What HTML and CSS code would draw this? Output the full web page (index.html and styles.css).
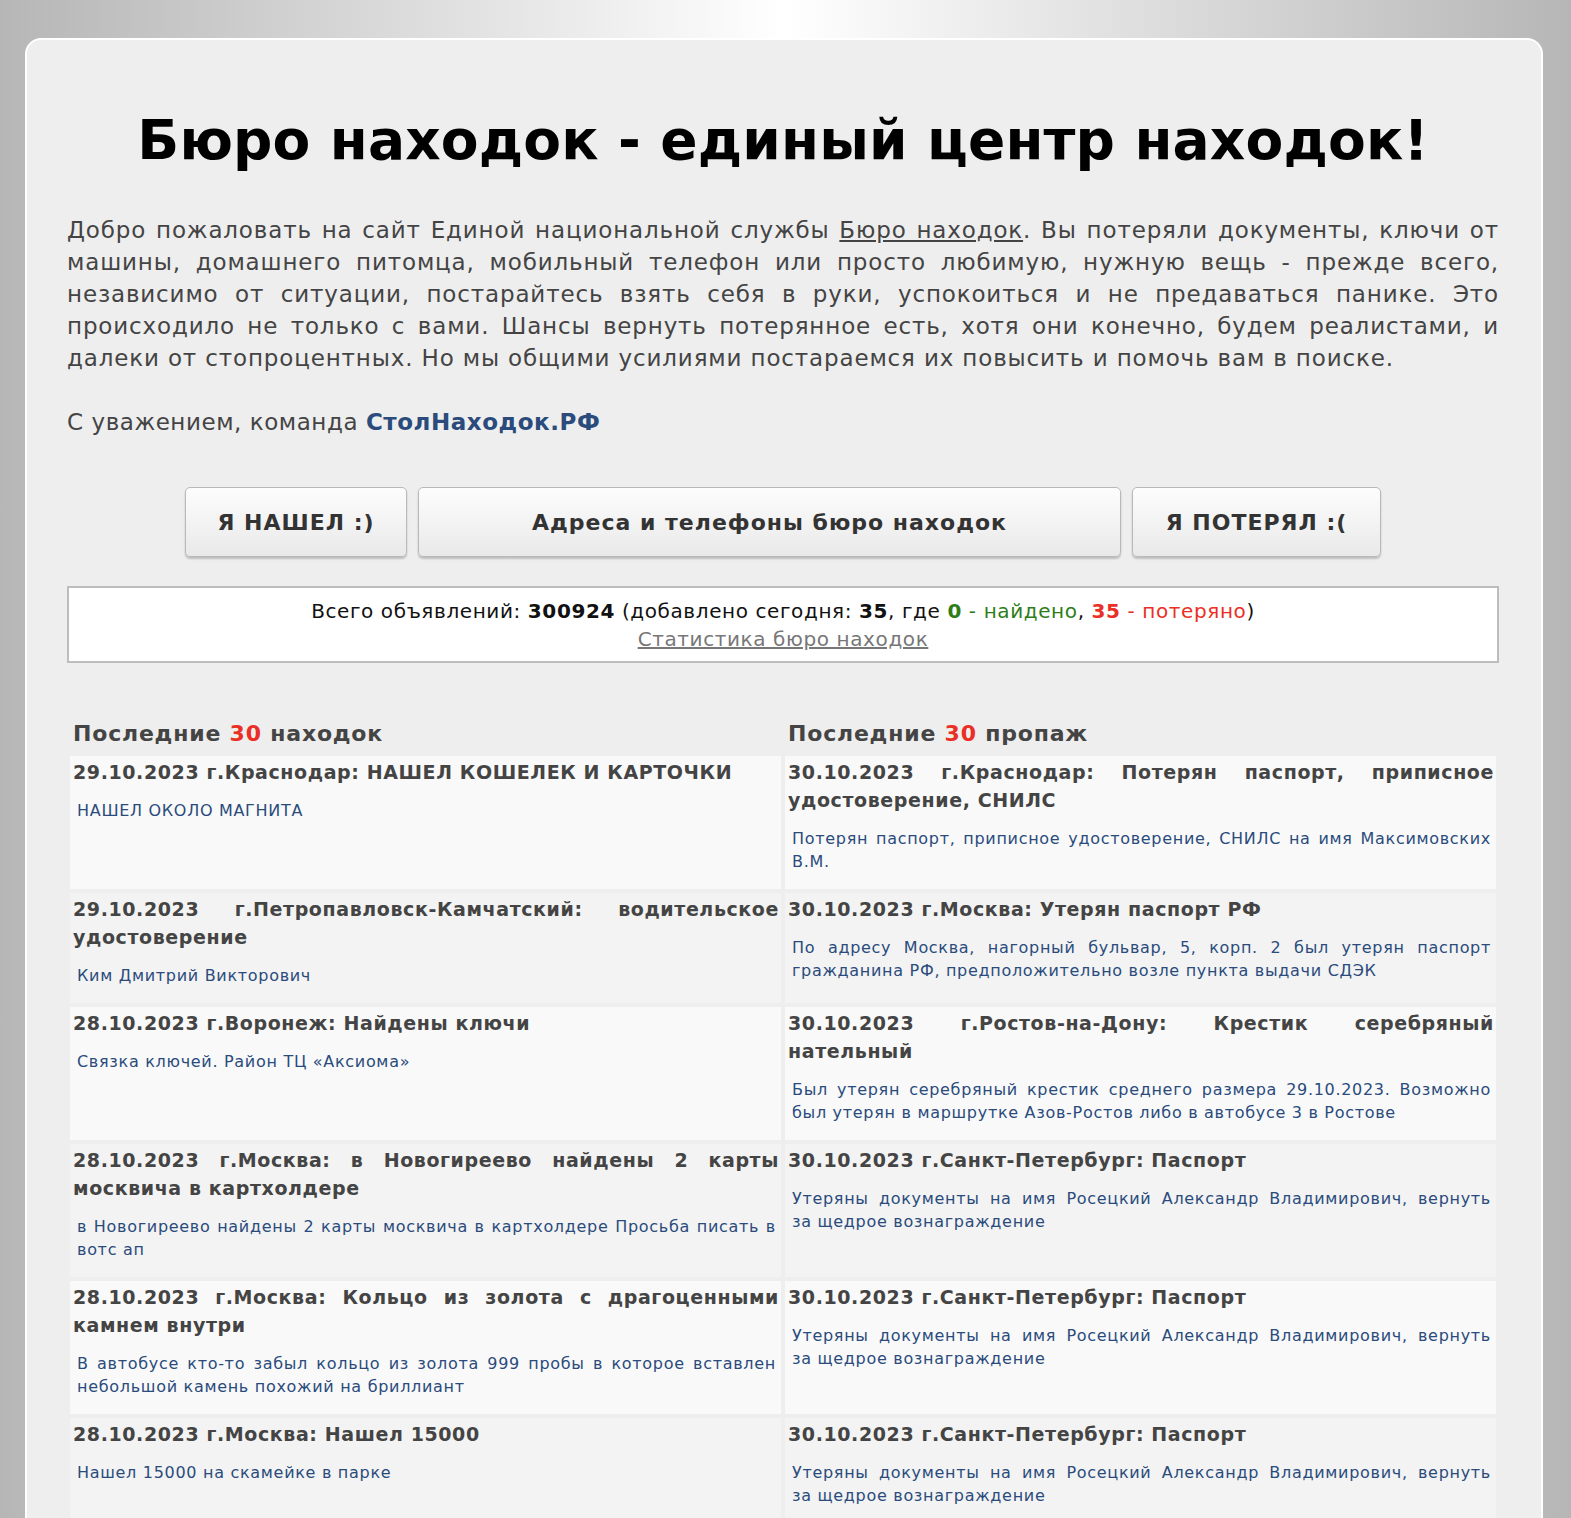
FILE: index.html
```html
<!DOCTYPE html>
<html lang="ru">
<head>
<meta charset="utf-8">
<title>Бюро находок - единый центр находок!</title>
<link rel="stylesheet" href="styles.css">
</head>
<body>
<div class="card">
  <h1 class="title">Бюро находок - единый центр находок!</h1>
  <p class="intro">Добро пожаловать на сайт Единой национальной службы <a href="#" class="intro-link">Бюро находок</a>. Вы потеряли документы, ключи от машины, домашнего питомца, мобильный телефон или просто любимую, нужную вещь - прежде всего, независимо от ситуации, постарайтесь взять себя в руки, успокоиться и не предаваться панике. Это происходило не только с вами. Шансы вернуть потерянное есть, хотя они конечно, будем реалистами, и далеки от стопроцентных. Но мы общими усилиями постараемся их повысить и помочь вам в поиске.</p>
  <p class="regards">С уважением, команда <a href="#" class="brand">СтолНаходок.РФ</a></p>

  <div class="actions">
    <a href="#" class="btn btn-found">Я НАШЕЛ :)</a>
    <a href="#" class="btn btn-addr">Адреса и телефоны бюро находок</a>
    <a href="#" class="btn btn-lost">Я ПОТЕРЯЛ :(</a>
  </div>

  <div class="stats">
    <div>Всего объявлений: <b>300924</b> (добавлено сегодня: <b>35</b>, где <span class="green"><b>0</b> - найдено</span>, <span class="red"><b>35</b> - потеряно</span>)</div>
    <div><a href="#" class="stats-link">Статистика бюро находок</a></div>
  </div>

  <div class="board">
    <div class="board-head">Последние <span class="red">30</span> находок</div>
    <div class="board-head">Последние <span class="red">30</span> пропаж</div>

    <div class="item odd"><div class="item-title">29.10.2023 г.Краснодар: НАШЕЛ КОШЕЛЕК И КАРТОЧКИ</div><div class="item-desc">НАШЕЛ ОКОЛО МАГНИТА</div></div>
    <div class="item odd"><div class="item-title">30.10.2023 г.Краснодар: Потерян паспорт, приписное удостоверение, СНИЛС</div><div class="item-desc">Потерян паспорт, приписное удостоверение, СНИЛС на имя Максимовских В.М.</div></div>

    <div class="item even"><div class="item-title">29.10.2023 г.Петропавловск-Камчатский: водительское удостоверение</div><div class="item-desc">Ким Дмитрий Викторович</div></div>
    <div class="item even"><div class="item-title">30.10.2023 г.Москва: Утерян паспорт РФ</div><div class="item-desc">По адресу Москва, нагорный бульвар, 5, корп. 2 был утерян паспорт гражданина РФ, предположительно возле пункта выдачи СДЭК</div></div>

    <div class="item odd"><div class="item-title">28.10.2023 г.Воронеж: Найдены ключи</div><div class="item-desc">Связка ключей. Район ТЦ «Аксиома»</div></div>
    <div class="item odd"><div class="item-title">30.10.2023 г.Ростов-на-Дону: Крестик серебряный нательный</div><div class="item-desc">Был утерян серебряный крестик среднего размера 29.10.2023. Возможно был утерян в маршрутке Азов-Ростов либо в автобусе 3 в Ростове</div></div>

    <div class="item even"><div class="item-title">28.10.2023 г.Москва: в Новогиреево найдены 2 карты москвича в картхолдере</div><div class="item-desc">в Новогиреево найдены 2 карты москвича в картхолдере Просьба писать в вотс ап</div></div>
    <div class="item even"><div class="item-title">30.10.2023 г.Санкт-Петербург: Паспорт</div><div class="item-desc">Утеряны документы на имя Росецкий Александр Владимирович, вернуть за&nbsp;щедрое вознаграждение</div></div>

    <div class="item odd"><div class="item-title">28.10.2023 г.Москва: Кольцо из золота с драгоценными камнем внутри</div><div class="item-desc">В автобусе кто-то забыл кольцо из золота 999 пробы в которое вставлен небольшой камень похожий на бриллиант</div></div>
    <div class="item odd"><div class="item-title">30.10.2023 г.Санкт-Петербург: Паспорт</div><div class="item-desc">Утеряны документы на имя Росецкий Александр Владимирович, вернуть за&nbsp;щедрое вознаграждение</div></div>

    <div class="item even"><div class="item-title">28.10.2023 г.Москва: Нашел 15000</div><div class="item-desc">Нашел 15000 на скамейке в парке</div></div>
    <div class="item even"><div class="item-title">30.10.2023 г.Санкт-Петербург: Паспорт</div><div class="item-desc">Утеряны документы на имя Росецкий Александр Владимирович, вернуть за&nbsp;щедрое вознаграждение</div></div>
  </div>
</div>
</body>
</html>
```

FILE: styles.css
```css
html, body {
  margin: 0;
  padding: 0;
}
body {
  background: linear-gradient(to right, #b6b6b6 0%, #ffffff 50%, #b6b6b6 100%);
  font-family: "DejaVu Sans", Verdana, sans-serif;
  color: #444;
  min-height: 1518px;
}
.card {
  box-sizing: border-box;
  width: 1518px;
  margin: 38px 0 0 25px;
  padding: 65px 42px 40px 40px;
  background: #eeeeee;
  border: 2px solid #ffffff;
  border-bottom: none;
  border-radius: 16px 16px 0 0;
  min-height: 1500px;
}
.title {
  margin: 0;
  font-family: "DejaVu Sans", sans-serif;
  font-weight: bold;
  font-size: 55px;
  letter-spacing: 0.15px;
  line-height: 70px;
  text-align: center;
  color: #000;
}
.intro {
  margin: 39px 0 0;
  font-size: 23px;
  letter-spacing: 0.85px;
  line-height: 32px;
  text-align: justify;
  color: #444;
}
.intro-link {
  color: #444;
  text-decoration: underline;
}
.regards {
  margin: 32px 0 0;
  font-size: 23px;
  letter-spacing: 0.55px;
  line-height: 32px;
  color: #444;
}
.brand {
  color: #2a4b7c;
  font-weight: bold;
  text-decoration: none;
}
.actions {
  display: flex;
  justify-content: center;
  gap: 11px;
  margin-top: 49px;
}
.btn {
  box-sizing: border-box;
  display: flex;
  align-items: center;
  justify-content: center;
  height: 70px;
  border: 1px solid #b9b9b9;
  border-radius: 5px;
  background: linear-gradient(to bottom, #fdfdfd 0%, #e9e9e9 100%);
  box-shadow: 0 2px 2px rgba(0,0,0,0.2);
  color: #333;
  font-weight: bold;
  font-size: 22px;
  letter-spacing: 1px;
  text-decoration: none;
}
.btn-found { width: 222px; }
.btn-addr { width: 703px; }
.btn-lost { width: 249px; }
.stats {
  margin-top: 29px;
  background: #fff;
  border: 2px solid #bdbdbd;
  padding: 9px 0 8px;
  text-align: center;
  font-size: 20px;
  letter-spacing: 0.6px;
  line-height: 28px;
  color: #111;
}
.green { color: #2e7d19; }
.red { color: #ea2f24; }
.stats-link {
  color: #777;
  text-decoration: underline;
}
.board {
  display: grid;
  grid-template-columns: 1fr 1fr;
  column-gap: 4px;
  row-gap: 4px;
  padding: 0 3px;
  margin-top: 53px;
}
.board-head {
  padding-left: 3px;
  font-size: 22px;
  letter-spacing: 0.8px;
  line-height: 36px;
  font-weight: bold;
  color: #444;
}
.item {
  padding: 2px 2px 16px 3px;
}
.item.odd { background: #f9f9f9; }
.item.even { background: #f3f3f3; }
.item-title {
  font-size: 19px;
  letter-spacing: 0.6px;
  line-height: 28px;
  font-weight: bold;
  color: #444;
  text-align: justify;
}
.item-desc {
  margin-top: 13px;
  padding: 0 3px 0 4px;
  font-size: 16px;
  letter-spacing: 0.7px;
  line-height: 23px;
  color: #2a4b7c;
  text-align: justify;
}
```
